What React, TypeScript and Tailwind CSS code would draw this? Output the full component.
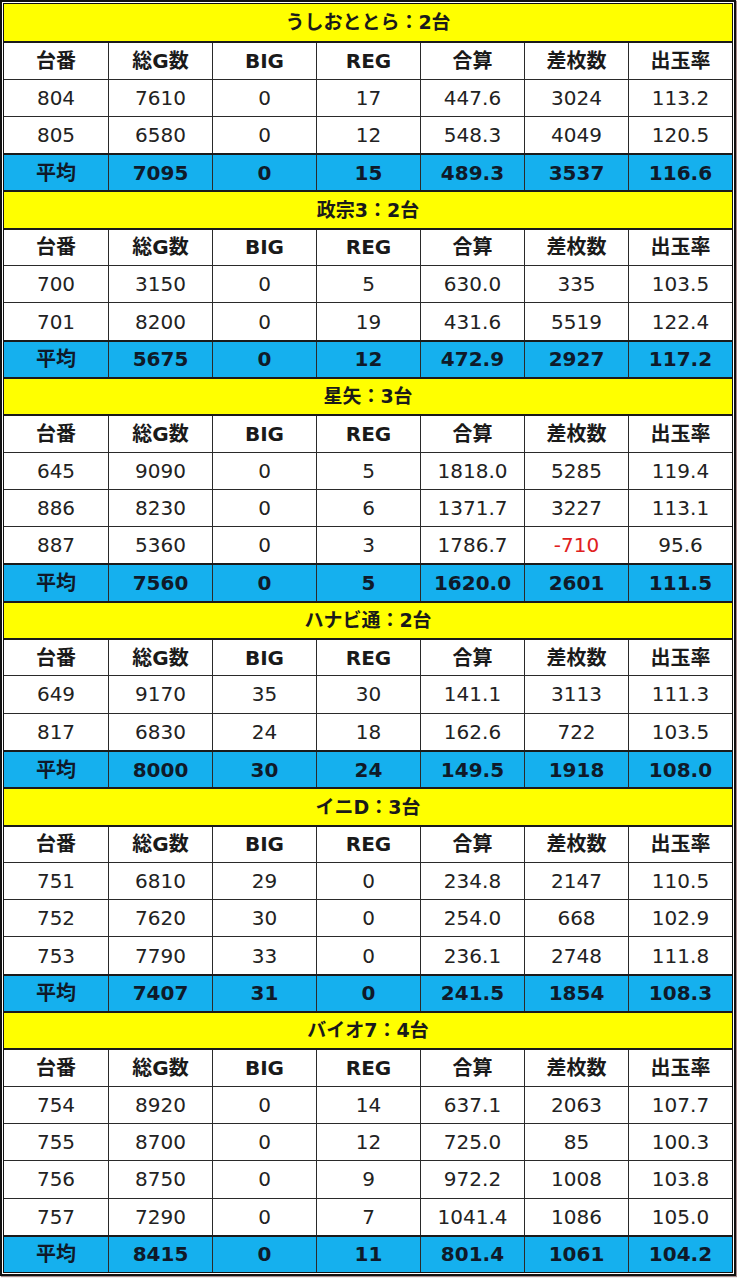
import React from 'react'

type Group = {
  title: string
  rows: string[][]
  avg: string[]
}

const headers = ['台番', '総G数', 'BIG', 'REG', '合算', '差枚数', '出玉率']

const groups: Group[] = [
  {
    title: 'うしおととら：2台',
    rows: [
      ['804', '7610', '0', '17', '447.6', '3024', '113.2'],
      ['805', '6580', '0', '12', '548.3', '4049', '120.5'],
    ],
    avg: ['平均', '7095', '0', '15', '489.3', '3537', '116.6'],
  },
  {
    title: '政宗3：2台',
    rows: [
      ['700', '3150', '0', '5', '630.0', '335', '103.5'],
      ['701', '8200', '0', '19', '431.6', '5519', '122.4'],
    ],
    avg: ['平均', '5675', '0', '12', '472.9', '2927', '117.2'],
  },
  {
    title: '星矢：3台',
    rows: [
      ['645', '9090', '0', '5', '1818.0', '5285', '119.4'],
      ['886', '8230', '0', '6', '1371.7', '3227', '113.1'],
      ['887', '5360', '0', '3', '1786.7', '-710', '95.6'],
    ],
    avg: ['平均', '7560', '0', '5', '1620.0', '2601', '111.5'],
  },
  {
    title: 'ハナビ通：2台',
    rows: [
      ['649', '9170', '35', '30', '141.1', '3113', '111.3'],
      ['817', '6830', '24', '18', '162.6', '722', '103.5'],
    ],
    avg: ['平均', '8000', '30', '24', '149.5', '1918', '108.0'],
  },
  {
    title: 'イニD：3台',
    rows: [
      ['751', '6810', '29', '0', '234.8', '2147', '110.5'],
      ['752', '7620', '30', '0', '254.0', '668', '102.9'],
      ['753', '7790', '33', '0', '236.1', '2748', '111.8'],
    ],
    avg: ['平均', '7407', '31', '0', '241.5', '1854', '108.3'],
  },
  {
    title: 'バイオ7：4台',
    rows: [
      ['754', '8920', '0', '14', '637.1', '2063', '107.7'],
      ['755', '8700', '0', '12', '725.0', '85', '100.3'],
      ['756', '8750', '0', '9', '972.2', '1008', '103.8'],
      ['757', '7290', '0', '7', '1041.4', '1086', '105.0'],
    ],
    avg: ['平均', '8415', '0', '11', '801.4', '1061', '104.2'],
  },
]

function Row({
  cells,
  className,
  cellClass,
}: {
  cells: string[]
  className: string
  cellClass?: (value: string) => string
}) {
  return (
    <div className={`grid grid-cols-7 h-[37.3px] ${className}`}>
      {cells.map((c, i) => (
        <div
          key={i}
          className={`flex items-center justify-center ${
            i > 0 ? 'border-l border-[#2a2a2a]' : ''
          } ${cellClass ? cellClass(c) : ''}`}
        >
          {c}
        </div>
      ))}
    </div>
  )
}

export default function App() {
  return (
    <div
      className="w-[737px] h-[1280px] bg-white"
      style={{ fontFamily: '"DejaVu Sans", "Noto Sans CJK JP", sans-serif' }}
    >
      <div className="w-[736px] h-[1276px] border-2 border-[#111] p-px shadow-[1px_1px_1px_rgba(80,30,30,0.5)]">
        <div className="w-[730px] border border-[#111] text-[#222]">
          {groups.map((g, gi) => (
            <div key={gi}>
              <div
                className={`h-[37.3px] bg-[#ffff00] flex items-center justify-center font-bold text-[19px] text-[#1a1a1a] ${
                  gi > 0 ? 'border-t-2 border-[#1a1a1a]' : ''
                }`}
              >
                {g.title}
              </div>
              <Row
                cells={headers}
                className="bg-white border-t-2 border-[#1a1a1a] font-bold text-[20px] text-[#1a1a1a]"
              />
              {g.rows.map((r, ri) => (
                <Row
                  key={ri}
                  cells={r}
                  className="bg-white border-t border-[#2a2a2a] text-[20px]"
                  cellClass={(v) => (v.startsWith('-') ? 'text-[#e02020]' : '')}
                />
              ))}
              <Row
                cells={g.avg}
                className="bg-[#15b0ee] border-t-2 border-[#1a1a1a] font-bold text-[20px] text-[#0f1a2a]"
              />
            </div>
          ))}
        </div>
      </div>
    </div>
  )
}
